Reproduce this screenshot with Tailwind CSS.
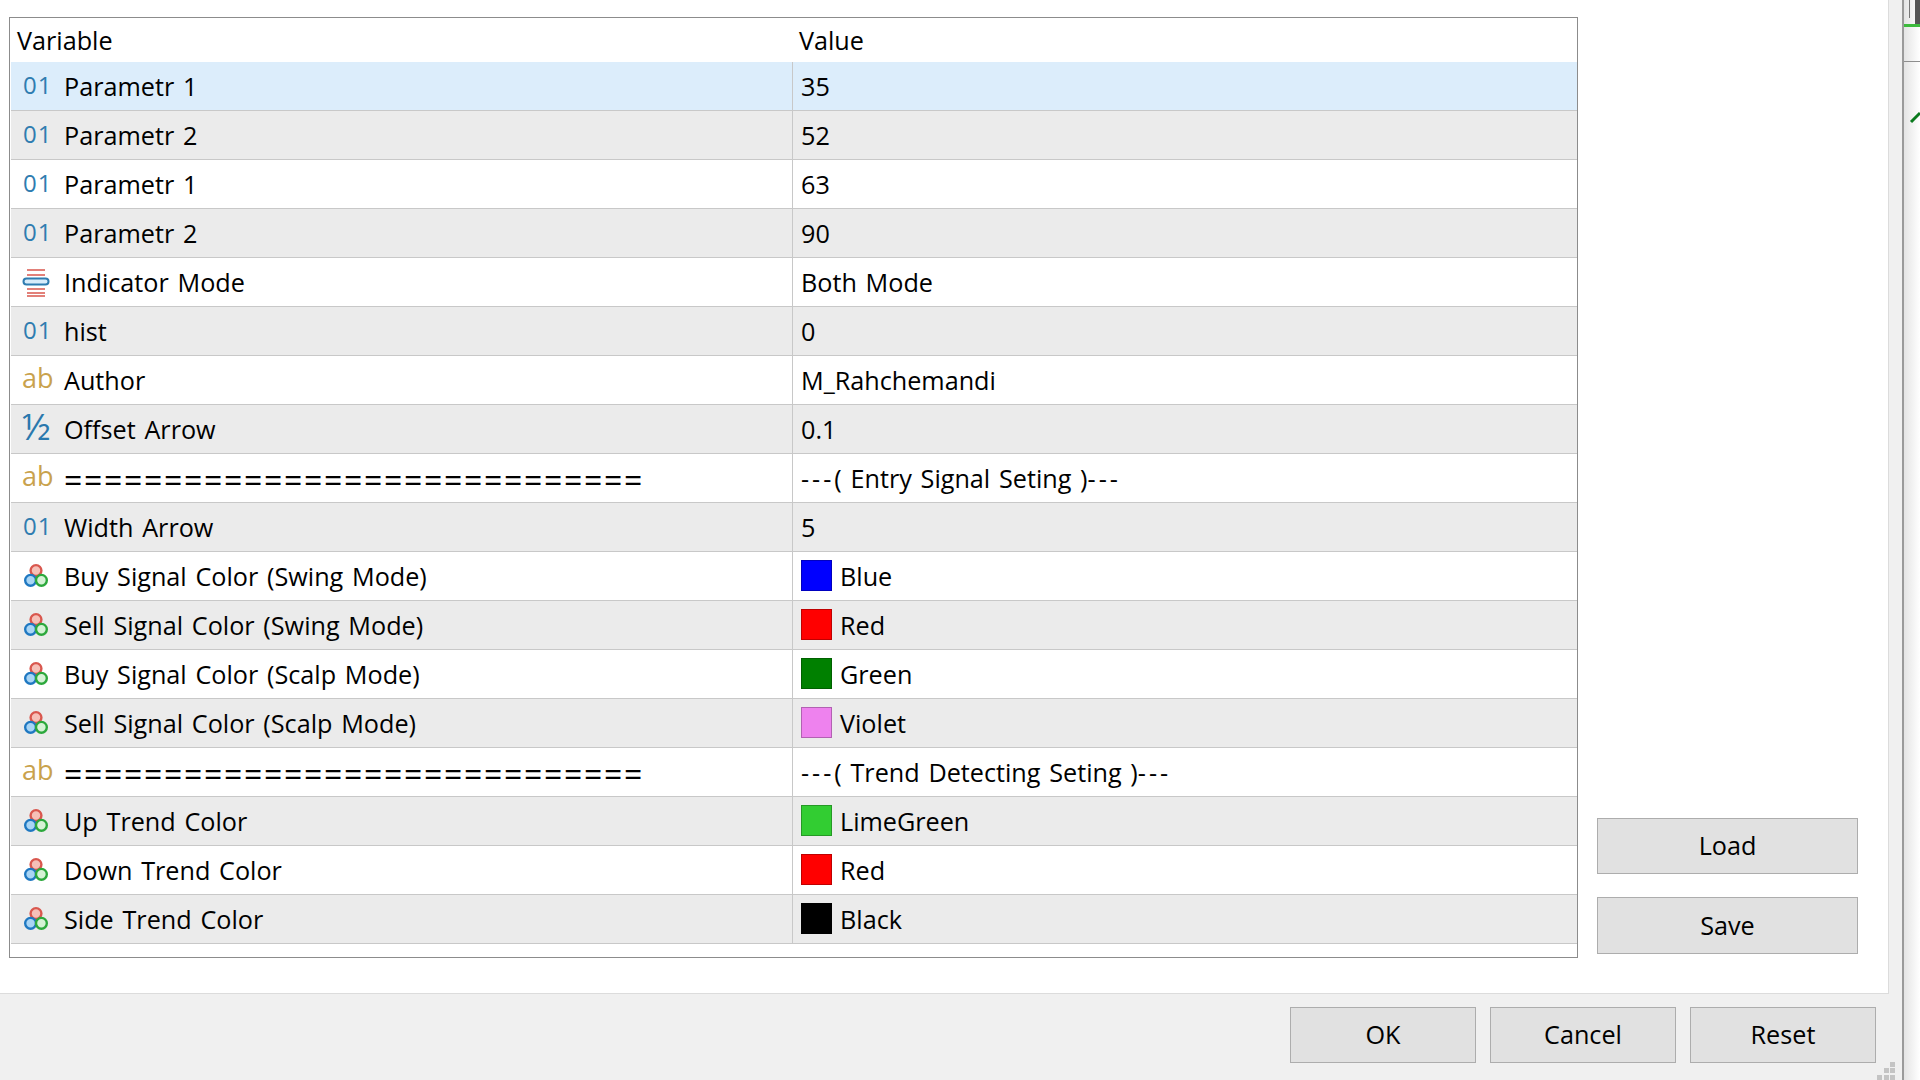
<!DOCTYPE html>
<html lang="en">
<head>
  <meta charset="UTF-8" />
  <title>Inputs</title>
  <script src="https://cdn.jsdelivr.net/npm/@tailwindcss/browser@4"></script>
</head>
<body class="w-[1920px] h-[1080px] overflow-hidden flex bg-white font-['Open_Sans',sans-serif] text-[25.2px] [word-spacing:2.2px] text-black">
  <!-- Dialog -->
  <div class="w-[1902px] h-[1080px] flex flex-col bg-[#f0f0f0]">
    <div class="h-[994px] w-[1889px] shrink-0 flex bg-white border-r border-b border-[#dcdcdc] pt-[17px] pl-[9px]">
      <!-- Table -->
      <div class="w-[1569px] h-[941px] border border-[#8c8c8c] bg-white pl-px flex flex-col">
        <div class="h-[44px] shrink-0 flex items-center leading-none">
          <div class="w-[782px] pl-[6px] pt-[2px]">Variable</div>
          <div class="pl-[6px] pt-[2px]">Value</div>
        </div>
        <div id="rows"></div>
      </div>
      <!-- Load / Save -->
      <div class="flex flex-col gap-[23px] ml-[19px] mt-[801px]">
        <button class="w-[261px] h-[56px] bg-[#e1e1e1] border border-[#adadad]">Load</button>
        <button class="w-[261px] h-[57px] bg-[#e1e1e1] border border-[#adadad]">Save</button>
      </div>
    </div>
    <!-- Footer -->
    <div class="relative flex-1 flex justify-end gap-[14px] pr-[26px] pt-[13px]">
      <button class="w-[186px] h-[56px] bg-[#e1e1e1] border border-[#adadad]">OK</button>
      <button class="w-[186px] h-[56px] bg-[#e1e1e1] border border-[#adadad]">Cancel</button>
      <button class="w-[186px] h-[56px] bg-[#e1e1e1] border border-[#adadad]">Reset</button>
      <svg class="absolute right-[5px] bottom-0" width="20" height="18" viewBox="0 0 20 18" fill="#c4c4c4">
        <rect x="13" y="0" width="5" height="5"/><rect x="7" y="6" width="5" height="5"/><rect x="13" y="6" width="5" height="5"/>
        <rect x="0" y="13" width="5" height="5"/><rect x="7" y="13" width="5" height="5"/><rect x="13" y="13" width="5" height="5"/>
      </svg>
    </div>
  </div>
  <!-- Chart behind the dialog -->
  <div class="w-[18px] h-[1080px] border-l-2 border-[#9a9a9a] bg-gradient-to-r from-[#e4e4e4] to-white">
    <div class="h-[24px] flex justify-end gap-[5px]">
      <div class="w-px bg-[#777777] h-[18px]"></div>
      <div class="w-[5px] bg-[#555555]"></div>
    </div>
    <div class="h-[3px] bg-[#3dbb3d]"></div>
    <div class="h-px mt-[34px] bg-[#8e8e8e]"></div>
    <svg class="mt-[46px]" width="16" height="16" viewBox="0 0 16 16"><path d="M7 14 L16 5" stroke="#0a7a1e" stroke-width="3"/></svg>
  </div>

  <script>
    const icons = {
      int: '<span class="ml-[1px] font-[\'Liberation_Sans\',sans-serif] text-[24px] leading-none text-[#2f7cb0] tracking-[1px] -mt-[3px]">01</span>',
      str: '<span class="text-[27px] leading-none text-[#c9a24d] -mt-[6px]">ab</span>',
      frac: '<span class="font-[\'Liberation_Sans\',sans-serif] text-[37px] leading-none text-[#2a78ad] -mt-[8px]">½</span>',
      color: '<svg class="ml-[1px]" width="26" height="26" viewBox="0 0 24 24" stroke-width="2.2"><circle cx="12" cy="7" r="5" fill="#f6c0b8" stroke="#d9574e"/><circle cx="7" cy="16" r="5" fill="#a9d5f5" stroke="#1f78c1"/><circle cx="17" cy="16" r="5" fill="#d5f2d5" stroke="#2ca83c"/></svg>',
      list: '<svg width="28" height="30" viewBox="0 0 28 30"><path d="M5 3H23M5 8H23M5 22H23M5 26H23M5 29H23" stroke="#d9574e" stroke-width="1.6"/><rect x="1.5" y="11.5" width="25" height="6" rx="3" fill="#d8ecfa" stroke="#2f7cb0" stroke-width="2"/></svg>'
    };

    const sep = '<span class="block mt-[1px] text-[32px] leading-none tracking-[1.7px]">=============================</span>';
    const dash = '<span class="tracking-[3px]">---</span>';

    const rows = [
      ['int', 'Parametr 1', '35'],
      ['int', 'Parametr 2', '52'],
      ['int', 'Parametr 1', '63'],
      ['int', 'Parametr 2', '90'],
      ['list', 'Indicator Mode', 'Both Mode'],
      ['int', 'hist', '0'],
      ['str', 'Author', 'M_Rahchemandi'],
      ['frac', 'Offset Arrow', '0.1'],
      ['str', sep, dash + '( Entry Signal Seting )' + dash],
      ['int', 'Width Arrow', '5'],
      ['color', 'Buy Signal Color (Swing Mode)', 'Blue', '#0000ff'],
      ['color', 'Sell Signal Color (Swing Mode)', 'Red', '#ff0000'],
      ['color', 'Buy Signal Color (Scalp Mode)', 'Green', '#008000'],
      ['color', 'Sell Signal Color (Scalp Mode)', 'Violet', '#ee82ee'],
      ['str', sep, dash + '( Trend Detecting Seting )' + dash],
      ['color', 'Up Trend Color', 'LimeGreen', '#32cd32'],
      ['color', 'Down Trend Color', 'Red', '#ff0000'],
      ['color', 'Side Trend Color', 'Black', '#000000']
    ];

    document.getElementById('rows').innerHTML = rows.map((row, i) => {
      const bg = i === 0 ? 'bg-[#dcedfb]' : (i % 2 ? 'bg-[#ebebeb]' : 'bg-white');
      const swatch = row[3]
        ? `<span class="w-[31px] h-[31px] -mt-[1px] mr-[8px] border border-black/25" style="background:${row[3]}"></span>`
        : '';
      return `
        <div class="h-[49px] flex border-b border-[#c8c8c8] ${bg}">
          <div class="w-[782px] flex items-center border-r border-[#c8c8c8]">
            <span class="w-[53px] shrink-0 pl-[11px] flex items-center">${icons[row[0]]}</span>
            <span class="pt-[2px]">${row[1]}</span>
          </div>
          <div class="flex items-center pl-[8px]">${swatch}<span class="pt-[2px]">${row[2]}</span></div>
        </div>`;
    }).join('');
  </script>
</body>
</html>
